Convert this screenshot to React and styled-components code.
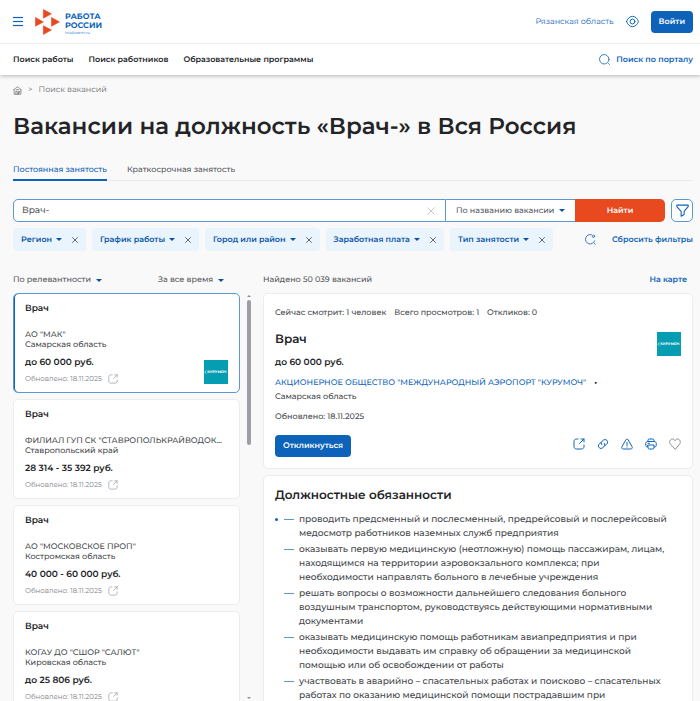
import React from "react";
import styled, { createGlobalStyle } from "styled-components";
import { useState } from "react";

const GlobalStyle = createGlobalStyle`
  * {
    box-sizing : border-box;
  }
  body {
    margin : 0;
    background : #f9f9f9;
    color : #222427;
    font-family : Montserrat, Inter, "Noto Sans", sans-serif;
    font-size : 8px;
    line-height : 12px;
    text-rendering : geometricPrecision;
  }
  button, input, select {
    font : inherit;
    color : inherit;
    margin : 0;
    padding : 0;
    border : 0;
    background : none;
    text-rendering : inherit;
  }
  button, select {
    cursor : pointer;
  }
  a {
    color : #0d63b9;
    text-decoration : none;
  }
  h1, h2, h3, p, ul {
    margin : 0;
    padding : 0;
  }
  ul {
    list-style : none;
  }
  svg {
    display : block;
    flex : none;
  }
`

const Page = styled.div`
  display : flex;
  flex-direction : column;
  height : 100vh;
  overflow : hidden;
`

const Header = styled.header`
  background : #fff;
  box-shadow : 0 1px 4px rgba(0, 0, 0, 0.28);
  z-index : 1;
`

const HeaderTop = styled.div`
  display : flex;
  align-items : center;
  height : 44px;
  padding : 0 7px 0 13px;
  border-bottom : 1px solid #ececec;
`

const MenuButton = styled.button`
  display : flex;
  flex-direction : column;
  gap : 3px;
  width : 10px;
  margin-right : 12px;
`

const MenuLine = styled.span`
  height : 1px;
  background : #0d63b9;
  box-shadow : 0 0 1px #0d63b9;
`

const Logo = styled.a`
  display : flex;
  align-items : center;
  gap : 5px;
  margin-right : auto;
`

const LogoText = styled.span`
  display : flex;
  flex-direction : column;
  padding-top : 5px;
  font-size : 8px;
  font-weight : 700;
  line-height : 9px;
`

const LogoSite = styled.span`
  color : #4a95dd;
  font-size : 4px;
  font-weight : 500;
  line-height : 5px;
`

const HeaderTools = styled.div`
  display : flex;
  align-items : center;
  gap : 12px;
`

const IconButton = styled.button`
  display : flex;
  color : ${(props) => props.$color || "#0d63b9"};
`

const PrimaryButton = styled.button`
  height : 22px;
  padding : 0 8px;
  border-radius : 4px;
  background : #0d63b9;
  color : #fff;
  font-weight : 600;
`

const Nav = styled.nav`
  display : flex;
  align-items : center;
  gap : 15px;
  height : 31px;
  padding : 0 7px 0 13px;
`

const NavLink = styled.a`
  color : #222427;
  font-weight : 600;
`

const PortalSearch = styled.a`
  display : flex;
  align-items : center;
  gap : 6px;
  margin-left : auto;
  font-weight : 600;
`

const Content = styled.main`
  display : flex;
  flex-direction : column;
  flex : 1;
  min-height : 0;
  padding : 9px 7px 0 13px;
`

const Breadcrumbs = styled.nav`
  display : flex;
  align-items : center;
  gap : 6px;
  color : #66696e;
`

const CrumbLink = styled.a`
  color : #66696e;
`

const Title = styled.h1`
  margin-top : 14px;
  font-size : 23px;
  font-weight : 600;
  line-height : 32px;
`

const Tabs = styled.div`
  display : flex;
  gap : 20px;
  margin-top : 19px;
  border-bottom : 1px solid #ebebeb;
`

const Tab = styled.button`
  height : 20px;
  margin-bottom : -1px;
  border-bottom : 2px solid ${(props) => (props.$active ? "#0d63b9" : "transparent")};
  color : ${(props) => (props.$active ? "#0d63b9" : "#55585d")};
  font-weight : 500;
`

const SearchForm = styled.form`
  display : flex;
  gap : 6px;
  margin-top : 18px;
`

const SearchBox = styled.div`
  display : flex;
  flex : 1;
  height : 23px;
`

const SearchField = styled.div`
  display : flex;
  align-items : center;
  flex : 1;
  padding : 0 10px 0 8px;
  border : 1px solid #5b98d2;
  border-radius : 5px 0 0 5px;
  background : #fff;
`

const SearchInput = styled.input`
  flex : 1;
  min-width : 0;
  color : #55585d;
  font-size : 9px;
  font-weight : 500;
  outline : none;
`

const SearchType = styled.div`
  display : flex;
  align-items : center;
  padding : 0 10px;
  border : solid #5b98d2;
  border-width : 1px 0;
  background : #fff;
  color : #55585d;
  font-weight : 500;
`

const SearchSubmit = styled.button`
  width : 90px;
  border-radius : 0 5px 5px 0;
  background : #e8491f;
  color : #fff;
  font-weight : 600;
`

const FilterButton = styled.button`
  display : flex;
  align-items : center;
  justify-content : center;
  width : 22px;
  height : 23px;
  border : 1px solid #5b98d2;
  border-radius : 5px;
  background : #fff;
  color : #0d63b9;
`

const Dropdown = styled.span`
  display : flex;
  align-items : center;
  gap : 4px;
  &::after {
    content : "";
    border : 3px solid transparent;
    border-top-color : #0b4fa8;
    border-bottom : 0;
    pointer-events : none;
  }
`

const Select = styled.select`
  appearance : none;
  outline : none;
`

const Filters = styled.div`
  display : flex;
  align-items : center;
  gap : 6px;
  margin-top : 6px;
`

const Chip = styled.div`
  display : flex;
  align-items : center;
  gap : 10px;
  height : 23px;
  padding : 0 8px;
  border-radius : 4px;
  background : #eaf4fd;
  color : #0b55a8;
  font-weight : 600;
  white-space : nowrap;
`

const ResetGroup = styled.div`
  display : flex;
  align-items : center;
  gap : 16px;
  margin-left : auto;
  white-space : nowrap;
`

const TextButton = styled.button`
  color : #0d63b9;
  font-weight : 600;
`

const Columns = styled.div`
  display : grid;
  grid-template-columns : minmax(0, 238fr) minmax(0, 430fr);
  grid-template-rows : auto minmax(0, 1fr);
  column-gap : 12px;
  row-gap : 7px;
  flex : 1;
  min-height : 0;
  margin-top : 23px;
`

const SortRow = styled.div`
  display : flex;
  justify-content : space-between;
  padding-right : 27px;
  color : #55585d;
  font-weight : 500;
`

const ResultRow = styled.div`
  display : flex;
  justify-content : space-between;
  padding-right : 6px;
  color : #55585d;
  font-weight : 500;
`

const MapLink = styled.a`
  font-weight : 600;
`

const ListPane = styled.div`
  display : flex;
  gap : 7px;
  min-height : 0;
`

const VacancyList = styled.ul`
  display : flex;
  flex-direction : column;
  gap : 6px;
  flex : 1;
  min-width : 0;
  overflow : hidden;
`

const ScrollTrack = styled.div`
  display : flex;
  flex-direction : column;
  align-items : center;
  width : 4px;
  padding : 2px 0;
`

const ScrollArrow = styled.span`
  border : 2px solid transparent;
  ${(props) => (props.$up ? "border-bottom-color : #8b8d93; border-top : 0;" : "border-top-color : #8b8d93; border-bottom : 0; margin-top : auto;")}
`

const ScrollThumb = styled.span`
  width : 4px;
  height : 36%;
  margin-top : 3px;
  border-radius : 2px;
  background : #9d9ea5;
`

const VacancyCard = styled.li`
  display : flex;
  align-items : flex-end;
  justify-content : space-between;
  flex : none;
  padding : 9px 11px 8px;
  border : 1px solid ${(props) => (props.$active ? "#5b98d2" : "#ececec")};
  border-radius : 5px;
  background : #fff;
  box-shadow : ${(props) => (props.$active ? "inset 1px 0 0 #0d63b9" : "none")};
`

const VacancyInfo = styled.div`
  min-width : 0;
`

const VacancyName = styled.h3`
  margin-bottom : 15px;
  font-size : 9px;
  font-weight : 600;
  line-height : 12px;
`

const VacancyText = styled.p`
  overflow : hidden;
  color : #44474b;
  font-weight : 500;
  line-height : 10px;
  text-overflow : ellipsis;
  white-space : nowrap;
`

const VacancySalary = styled.p`
  margin-top : 7px;
  font-size : 9px;
  font-weight : 600;
  line-height : 12px;
`

const VacancyDate = styled.div`
  display : flex;
  align-items : center;
  gap : 6px;
  height : 10px;
  margin-top : 5px;
  color : #7b7e83;
  font-size : 7px;
`

const DetailPane = styled.div`
  display : flex;
  flex-direction : column;
  gap : 6px;
  min-height : 0;
  overflow : hidden;
`

const DetailCard = styled.section`
  flex : none;
  padding : 11px;
  border : 1px solid #ececec;
  border-radius : 5px;
  background : #fff;
`

const Stats = styled.div`
  display : flex;
  gap : 8px;
  padding-top : 2px;
  color : #44474b;
  font-weight : 500;
`

const DetailHead = styled.div`
  display : flex;
  align-items : flex-start;
  justify-content : space-between;
  margin-top : 13px;
`

const DetailName = styled.h2`
  font-size : 12px;
  font-weight : 600;
  line-height : 16px;
`

const DetailSalary = styled.p`
  margin-top : 9px;
  font-size : 9px;
  font-weight : 600;
`

const Company = styled.p`
  display : flex;
  gap : 8px;
  margin-top : 8px;
`

const DetailText = styled.p`
  margin-top : ${(props) => (props.$spaced ? "8px" : "2px")};
  color : #44474b;
  font-weight : 500;
`

const CompanyLink = styled.a`
  font-weight : 500;
`

const Actions = styled.div`
  display : flex;
  align-items : center;
  justify-content : space-between;
  margin-top : 12px;
`

const ActionIcons = styled.div`
  display : flex;
  gap : 12px;
  padding-bottom : 4px;
`

const SectionTitle = styled.h2`
  margin-top : 1px;
  font-size : 12px;
  font-weight : 600;
  line-height : 16px;
`

const Duties = styled.ul`
  display : flex;
  flex-direction : column;
  gap : 2px;
  margin-top : 9px;
  color : #44474b;
  font-size : 9px;
  font-weight : 500;
  line-height : 14px;
`

const Duty = styled.li`
  display : grid;
  grid-template-columns : 4px 10px 1fr;
  column-gap : 5px;
  white-space : pre-line;
  &::before {
    content : "";
    width : 3px;
    height : 3px;
    margin-top : 5px;
    border-radius : 2px;
    background : ${(props) => (props.$marked ? "#0d63b9" : "transparent")};
  }
`

const Dash = styled.span`
  height : 1px;
  margin-top : 6px;
  background : #5b98d2;
`

const filters = ["Регион", "График работы", "Город или район", "Заработная плата", "Тип занятости"];

const vacancies = [
  { company: 'АО "МАК"', region: "Самарская область", salary: "до 60 000 руб.", logo: true },
  { company: 'ФИЛИАЛ ГУП СК "СТАВРОПОЛЬКРАЙВОДОК...', region: "Ставропольский край", salary: "28 314 - 35 392 руб." },
  { company: 'АО "МОСКОВСКОЕ ПРОП"', region: "Костромская область", salary: "40 000 - 60 000 руб." },
  { company: 'КОГАУ ДО "СШОР "САЛЮТ"', region: "Кировская область", salary: "до 25 806 руб." },
];

const duties = [
  "проводить предсменный и послесменный, предрейсовый и послерейсовый\nмедосмотр работников наземных служб предприятия",
  "оказывать первую медицинскую (неотложную) помощь пассажирам, лицам,\nнаходящимся на территории аэровокзального комплекса; при\nнеобходимости направлять больного в лечебные учреждения",
  "решать вопросы о возможности дальнейшего следования больного\nвоздушным транспортом, руководствуясь действующими нормативными\nдокументами",
  "оказывать медицинскую помощь работникам авиапредприятия и при\nнеобходимости выдавать им справку об обращении за медицинской\nпомощью или об освобождении от работы",
  "участвовать в аварийно – спасательных работах и поисково – спасательных\nработах по оказанию медицинской помощи пострадавшим при",
];

function Icon({ size = 12, box = 24, width = 2, children }) {
  return (
    <svg width={size} height={size} viewBox={`0 0 ${box} ${box}`} fill="none" stroke="currentColor" strokeWidth={width} strokeLinecap="round" strokeLinejoin="round" aria-hidden="true">
      {children}
    </svg>
  );
}

function LogoIcon() {
  return (
    <svg width="25" height="26" viewBox="0 0 25 26" fill="#e8491f" stroke="#e8491f" strokeWidth="0.6" strokeLinejoin="round" aria-hidden="true">
      <path d="M8.4 0.6 L16.4 4.8 L8.4 9.2Z" />
      <path d="M0.5 8.5 L8.4 12.9 L0.5 17.2Z" />
      <path d="M16.5 8.5 L24.5 12.9 L16.5 17.2Z" />
      <path d="M8.4 16.7 L16.4 21 L8.4 25.4Z" />
    </svg>
  );
}

function EyeIcon() {
  return (
    <Icon size={13} width={1.8}>
      <path d="M1 12C3 6 7.500 2.500 12 2.500S21 6 23 12c-2 6-6.500 9.500-11 9.500S3 18 1 12Z" />
      <circle cx="12" cy="12" r="4.500" />
    </Icon>
  );
}

function SearchIcon() {
  return (
    <Icon size={11} width={1.8}>
      <circle cx="11.5" cy="11.5" r="10.3" />
      <path d="M20.8 20.8l2 2" />
    </Icon>
  );
}

function HomeIcon() {
  return (
    <Icon size={9} width={1.8}>
      <path d="M1.500 10.500 11 2.500c.600-.500 1.400-.500 2 0l9.500 8M3 9.500V22h18V9.500" />
      <path d="M7.500 22v-8h4v8M15 22v-8h3v4h-3M8.500 9.500h7" />
    </Icon>
  );
}

function CloseIcon({ size = 6, width = 1.6 }) {
  return (
    <Icon size={size} box={12} width={width}>
      <path d="M1 1l10 10M11 1L1 11" />
    </Icon>
  );
}

function FunnelIcon() {
  return (
    <Icon size={13} width={2}>
      <path d="M1.500 2h21v3L15 13.500v6L9.500 22.500v-9L1.500 5Z" />
    </Icon>
  );
}

function ResetIcon() {
  return (
    <Icon size={11} width={1.8}>
      <path d="M14 1.500A10.300 10.300 0 1 0 21 15" />
      <circle cx="18.500" cy="5" r="2.500" />
      <path d="M20 20l2.500 2.500" />
    </Icon>
  );
}

function ShareIcon({ size = 12 }) {
  return (
    <Icon size={size}>
      <path d="M10 2H7C4 2 2 4 2 7v10c0 3 2 5 5 5h10c3 0 5-2 5-5v-3" />
      <path d="M13 11L22 2M16 2h6v6" />
    </Icon>
  );
}

function LinkIcon() {
  return (
    <Icon>
      <path d="M9.500 13.500A5 5 0 0 1 10.500 6l2-1.500A5.200 5.200 0 0 1 20.500 11c-1 1.800-2.500 3-4.500 3.500" />
      <path d="M14.500 10.500A5 5 0 0 1 13.500 18l-2 1.500A5.200 5.200 0 0 1 3.500 13c1-1.800 2.500-3 4.500-3.500" />
    </Icon>
  );
}

function WarningIcon() {
  return (
    <Icon>
      <path d="M9.800 3.500c1-1.800 3.400-1.800 4.400 0l8 14c1 2-.200 4.500-2.700 4.500h-15c-2.500 0-3.700-2.500-2.700-4.500Z" />
      <path d="M12 9v6M12 18v.300" />
    </Icon>
  );
}

function PrintIcon() {
  return (
    <Icon>
      <path d="M6 7V4.500C6 3 7 2 8.500 2h7C17 2 18 3 18 4.500V7" />
      <path d="M6 18H5c-2 0-3.500-1.500-3.500-3.500V11c0-2 1.500-4 3.500-4h14c2 0 3.500 2 3.500 4v3.500c0 2-1.500 3.500-3.500 3.500h-1" />
      <path d="M6 14h12v5.500c0 1.500-1 2.500-2.500 2.500h-7C7 22 6 21 6 19.500ZM6 10.500h3" />
    </Icon>
  );
}

function HeartIcon() {
  return (
    <Icon>
      <path d="M12 22L3 12.500C-1 7.500 2.500 2 7 2c2.500 0 4 1.500 5 3.500C13 3.500 14.500 2 17 2c4.500 0 8 5.500 4 10.500Z" />
    </Icon>
  );
}

function CompanyLogo() {
  return (
    <svg width="24" height="24" viewBox="0 0 24 24" role="img" aria-label="Курумоч">
      <rect width="24" height="24" fill="#049db1" />
      <path d="M2.600 10.800c-2 .200-2 2.600 0 2.600" fill="none" stroke="#fff" strokeWidth="0.600" />
      <text x="3.200" y="13.300" fill="#fff" fontSize="3.600" fontWeight="700">КУРУМОЧ</text>
    </svg>
  );
}

function App() {
  const [query, setQuery] = useState("Врач-");

  return (
    <Page>
      <GlobalStyle />
      <Header>
        <HeaderTop>
          <MenuButton aria-label="Меню">
            <MenuLine />
            <MenuLine />
            <MenuLine />
          </MenuButton>
          <Logo href="/">
            <LogoIcon />
            <LogoText>
              <span>РАБОТА</span>
              <span>РОССИИ</span>
              <LogoSite>trudvsem.ru</LogoSite>
            </LogoText>
          </Logo>
          <HeaderTools>
            <a href="/">Рязанская область</a>
            <IconButton aria-label="Версия для слабовидящих"><EyeIcon /></IconButton>
            <PrimaryButton>Войти</PrimaryButton>
          </HeaderTools>
        </HeaderTop>
        <Nav>
          <NavLink href="/">Поиск работы</NavLink>
          <NavLink href="/">Поиск работников</NavLink>
          <NavLink href="/">Образовательные программы</NavLink>
          <PortalSearch href="/"><SearchIcon />Поиск по порталу</PortalSearch>
        </Nav>
      </Header>

      <Content>
        <Breadcrumbs>
          <CrumbLink href="/" aria-label="Главная"><HomeIcon /></CrumbLink>
          <span>&gt;</span>
          <CrumbLink href="/">Поиск вакансий</CrumbLink>
        </Breadcrumbs>
        <Title>Вакансии на должность «Врач-» в Вся Россия</Title>
        <Tabs>
          <Tab $active>Постоянная занятость</Tab>
          <Tab>Краткосрочная занятость</Tab>
        </Tabs>

        <SearchForm onSubmit={(e) => e.preventDefault()}>
          <SearchBox>
            <SearchField>
              <SearchInput aria-label="Поиск вакансий" value={query} onChange={(e) => setQuery(e.target.value)} />
              <IconButton type="button" aria-label="Очистить" $color="#b9bbbf" onClick={() => setQuery("")}><CloseIcon size={8} width={1.2} /></IconButton>
            </SearchField>
            <SearchType>
              <Dropdown>
                <Select aria-label="Где искать"><option>По названию вакансии</option></Select>
              </Dropdown>
            </SearchType>
            <SearchSubmit>Найти</SearchSubmit>
          </SearchBox>
          <FilterButton type="button" aria-label="Фильтры"><FunnelIcon /></FilterButton>
        </SearchForm>

        <Filters>
          {filters.map((name) => (
            <Chip key={name}>
              <button><Dropdown>{name}</Dropdown></button>
              <IconButton $color="#44474b" aria-label={`Убрать: ${name}`}><CloseIcon /></IconButton>
            </Chip>
          ))}
          <ResetGroup>
            <IconButton aria-label="Обновить"><ResetIcon /></IconButton>
            <TextButton>Сбросить фильтры</TextButton>
          </ResetGroup>
        </Filters>

        <Columns>
          <SortRow>
            <Dropdown><Select aria-label="Сортировка"><option>По релевантности</option></Select></Dropdown>
            <Dropdown><Select aria-label="Период"><option>За все время</option></Select></Dropdown>
          </SortRow>
          <ResultRow>
            <span>Найдено 50 039 вакансий</span>
            <MapLink href="/">На карте</MapLink>
          </ResultRow>

          <ListPane>
            <VacancyList>
              {vacancies.map((item, index) => (
                <VacancyCard key={item.company} $active={index === 0}>
                  <VacancyInfo>
                    <VacancyName>Врач</VacancyName>
                    <VacancyText>{item.company}</VacancyText>
                    <VacancyText>{item.region}</VacancyText>
                    <VacancySalary>{item.salary}</VacancySalary>
                    <VacancyDate>
                      Обновлено: 18.11.2025
                      <IconButton $color="#a9abb0" aria-label="Открыть вакансию"><ShareIcon size={10} /></IconButton>
                    </VacancyDate>
                  </VacancyInfo>
                  {item.logo && <CompanyLogo />}
                </VacancyCard>
              ))}
            </VacancyList>
            <ScrollTrack>
              <ScrollArrow $up />
              <ScrollThumb />
              <ScrollArrow />
            </ScrollTrack>
          </ListPane>

          <DetailPane>
            <DetailCard>
              <Stats>
                <span>Сейчас смотрит: 1 человек</span>
                <span>Всего просмотров: 1</span>
                <span>Откликов: 0</span>
              </Stats>
              <DetailHead>
                <div>
                  <DetailName>Врач</DetailName>
                  <DetailSalary>до 60 000 руб.</DetailSalary>
                </div>
                <CompanyLogo />
              </DetailHead>
              <Company>
                <CompanyLink href="/">АКЦИОНЕРНОЕ ОБЩЕСТВО "МЕЖДУНАРОДНЫЙ АЭРОПОРТ "КУРУМОЧ"</CompanyLink>
                <b>•</b>
              </Company>
              <DetailText>Самарская область</DetailText>
              <DetailText $spaced>Обновлено: 18.11.2025</DetailText>
              <Actions>
                <PrimaryButton>Откликнуться</PrimaryButton>
                <ActionIcons>
                  <IconButton aria-label="Открыть"><ShareIcon /></IconButton>
                  <IconButton aria-label="Скопировать ссылку"><LinkIcon /></IconButton>
                  <IconButton aria-label="Пожаловаться"><WarningIcon /></IconButton>
                  <IconButton aria-label="Печать"><PrintIcon /></IconButton>
                  <IconButton aria-label="В избранное" $color="#8b8d93"><HeartIcon /></IconButton>
                </ActionIcons>
              </Actions>
            </DetailCard>
            <DetailCard>
              <SectionTitle>Должностные обязанности</SectionTitle>
              <Duties>
                {duties.map((text, index) => (
                  <Duty key={text} $marked={index === 0}>
                    <Dash />
                    <span>{text}</span>
                  </Duty>
                ))}
              </Duties>
            </DetailCard>
          </DetailPane>
        </Columns>
      </Content>
    </Page>
  );
}

export default App;
